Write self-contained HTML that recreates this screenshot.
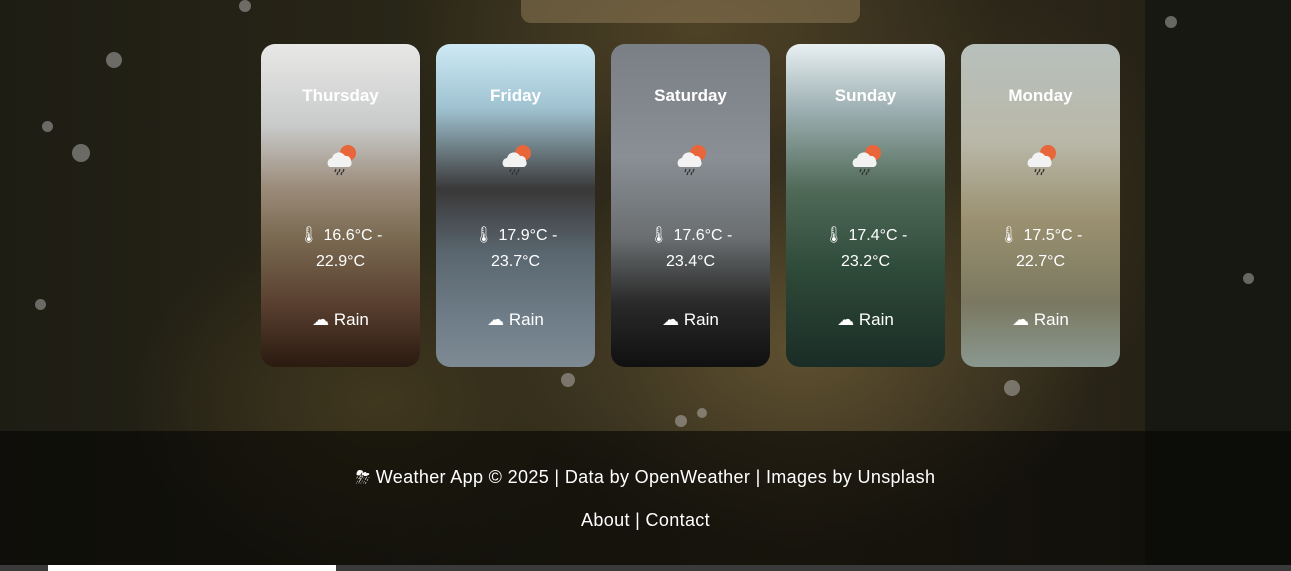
<!DOCTYPE html>
<html><head><meta charset="utf-8"><style>
*{margin:0;padding:0;box-sizing:border-box}
body{width:1291px;height:571px;overflow:hidden;position:relative;font-family:"Liberation Sans",sans-serif;color:#fff;
background:#1d1b12}
.bg{position:absolute;left:0;top:0;width:1145px;height:565px;
background:radial-gradient(ellipse 300px 200px at 800px 350px,#5e5030,transparent),
radial-gradient(ellipse 250px 180px at 380px 400px,#40371e,transparent),
radial-gradient(ellipse 300px 150px at 700px 30px,#4e4226,transparent),
radial-gradient(ellipse 200px 200px at 1000px 200px,#36301c,transparent),
linear-gradient(90deg,#1e1d14,#2a2718 40%,#332c1c 70%,#262216)}
.right{position:absolute;left:1145px;top:0;width:146px;height:565px;background:#181812}
.top{position:absolute;left:521px;top:-10px;width:339px;height:33px;border-radius:10px;background:rgba(140,120,85,.55)}
.card{position:absolute;top:44px;width:159px;height:323px;border-radius:14px;overflow:hidden;text-align:center;font-weight:bold}
.card .d{position:absolute;top:42px;left:0;right:0;font-size:17px}
.card .ic{position:absolute;top:99px;left:62px}
.card .t{position:absolute;top:179px;left:0;right:0;font-size:16px;font-weight:normal;line-height:26px}
.card .r{position:absolute;top:266px;left:0;right:0;font-size:17px;font-weight:normal}
.dot{position:absolute;border-radius:50%;background:rgba(200,200,200,.45)}
.foot{position:absolute;left:0;top:431px;width:1291px;height:134px;background:rgba(5,5,3,.6);text-align:center;font-size:18px;letter-spacing:0.35px}
.strip{position:absolute;left:0;top:565px;width:1291px;height:6px;background:#3a3a3a}
</style></head><body>
<div class="bg"></div><div class="right"></div><div class="top"></div>
<div class="dot" style="left:106px;top:52px;width:16px;height:16px"></div>
<div class="dot" style="left:72px;top:144px;width:18px;height:18px"></div>
<div class="dot" style="left:42px;top:121px;width:11px;height:11px"></div>
<div class="dot" style="left:35px;top:299px;width:11px;height:11px"></div>
<div class="dot" style="left:239px;top:0;width:12px;height:12px"></div>
<div class="dot" style="left:1165px;top:16px;width:12px;height:12px"></div>
<div class="dot" style="left:1243px;top:273px;width:11px;height:11px"></div>
<div class="dot" style="left:561px;top:373px;width:14px;height:14px"></div>
<div class="dot" style="left:1004px;top:380px;width:16px;height:16px"></div>
<div class="dot" style="left:675px;top:415px;width:12px;height:12px"></div>
<div class="dot" style="left:697px;top:408px;width:10px;height:10px"></div>

<div class="card" style="left:261px;background:linear-gradient(180deg,#e8e8e6 0%,#c9cbcb 25%,#9a8a78 45%,#7a6a52 60%,#5a4030 80%,#2a1a10 100%)"></div>
<div class="card" style="left:436px;background:linear-gradient(180deg,#cde9f5 0%,#9fc2d0 20%,#3a3838 45%,#5a6770 65%,#6f7d88 85%,#7d8a94 100%)"></div>
<div class="card" style="left:611px;background:linear-gradient(180deg,#7a7f86 0%,#8a8f95 35%,#6a6e70 60%,#2a2a2a 80%,#101010 100%)"></div>
<div class="card" style="left:786px;background:linear-gradient(180deg,#e8f0f2 0%,#9eb0b3 20%,#506a58 45%,#2e4a38 70%,#1a2c26 100%)"></div>
<div class="card" style="left:961px;background:linear-gradient(180deg,#b8c0bc 0%,#b9b8a8 30%,#9a9070 55%,#7a7860 80%,#8a9890 100%)"></div>

<div id="cards"></div>
<script>
const c=[["Thursday","16.6","22.9",261],["Friday","17.9","23.7",436],["Saturday","17.6","23.4",611],["Sunday","17.4","23.2",786],["Monday","17.5","22.7",961]];
let h="";
for(const x of c){h+=`<div class="card" style="left:${x[3]}px;background:transparent"><div class="d">${x[0]}</div>
<svg class="ic" width="36" height="34" viewBox="0 0 34 34"><circle cx="24" cy="10" r="8" fill="#e8663a"/><path d="M4 22a5 5 0 0 1 4-7a7 7 0 0 1 13-2a5 5 0 0 1 6 5a4 4 0 0 1-2 6H6a3 3 0 0 1-2-2z" fill="#f2f2f2"/><path d="M12 26l-1 3M16 26l-1 3M20 26l-1 3M14 29l-1 3M18 29l-1 3" stroke="#333" stroke-width="1.3"/></svg>
<div class="t">🌡 ${x[1]}°C -<br>${x[2]}°C</div><div class="r">☁ Rain</div></div>`}
document.getElementById("cards").innerHTML=h;
</script>
<div class="foot"><div style="margin-top:36px">⛈ Weather App © 2025 | Data by OpenWeather | Images by Unsplash</div><div style="margin-top:22px">About | Contact</div></div>
<div class="strip"><div style="position:absolute;left:48px;width:288px;height:6px;background:#fff"></div></div>
</body></html>
